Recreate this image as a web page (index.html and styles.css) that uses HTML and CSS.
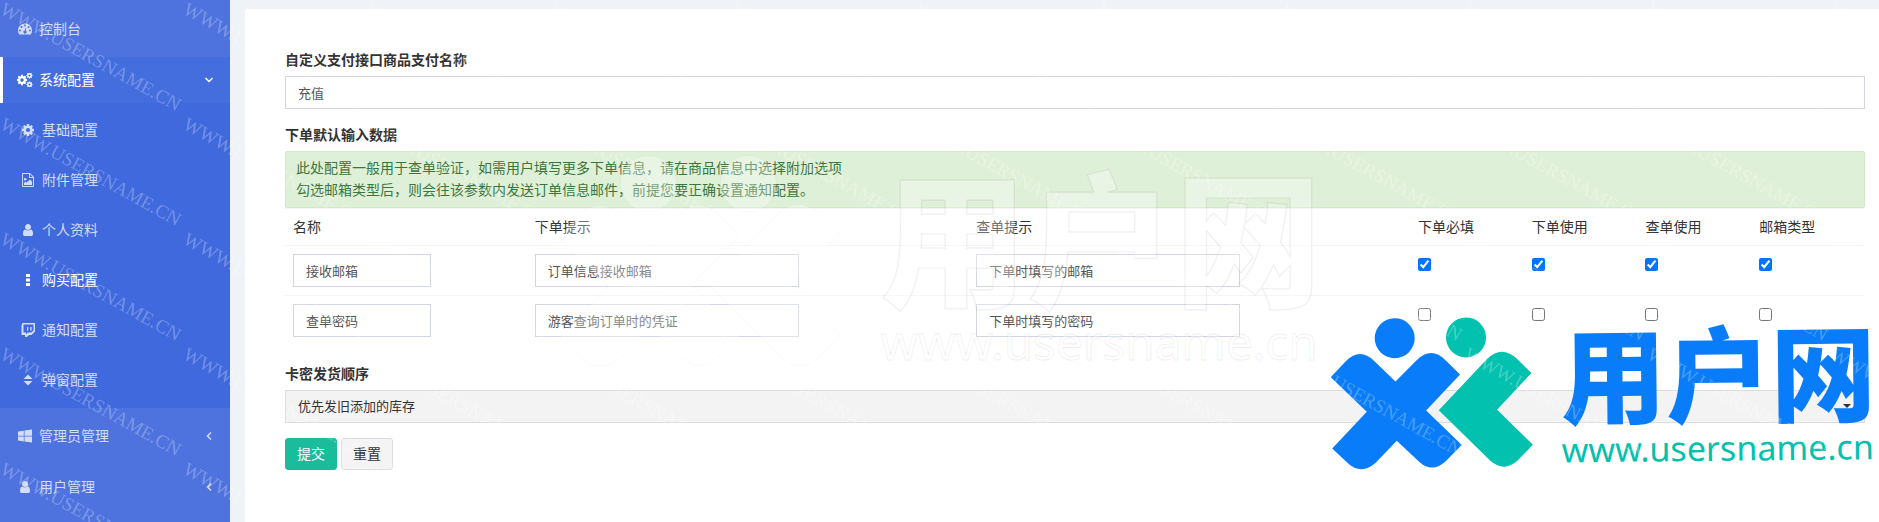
FILE: index.html
```html
<!DOCTYPE html>
<html lang="zh-CN">
<head>
<meta charset="utf-8">
<title>购买配置</title>
<link rel="stylesheet" href="styles.css">
</head>
<body>
<svg class="defs" aria-hidden="true">
  <symbol id="cog" viewBox="0 0 1792 1792"><path d="M1152 896q0-106-75-181t-181-75-181 75-75 181 75 181 181 75 181-75 75-181zm512-109v222q0 12-8 23t-20 13l-185 28q-19 54-39 91 35 50 107 138 10 12 10 25t-9 23q-27 37-99 108t-94 71q-12 0-26-9l-138-108q-44 23-91 38-16 136-29 186-7 28-36 28h-222q-14 0-24.500-8.500t-11.500-21.500l-28-184q-49-16-90-37l-141 107q-10 9-25 9-14 0-25-11-126-114-165-168-7-10-7-23 0-12 8-23 15-21 51-66.500t54-70.500q-27-50-41-99l-183-27q-13-2-21-12.500t-8-23.500v-222q0-12 8-23t19-13l186-28q14-46 39-92-40-57-107-138-10-12-10-24 0-10 9-23 26-36 98.500-107.500t94.500-71.500q13 0 26 10l138 107q44-23 91-38 16-136 29-186 7-28 36-28h222q14 0 24.500 8.500t11.500 21.500l28 184q49 16 90 37l142-107q9-9 24-9 13 0 25 10 129 119 165 170 7 8 7 22 0 12-8 23-15 21-51 66.500t-54 70.500q26 50 41 98l183 28q13 2 21 12.500t8 23.500z"/></symbol>
  <symbol id="user" viewBox="-256 0 1792 1792"><path d="M1280 1399q0 109-62.500 187t-150.500 78h-854q-88 0-150.500-78t-62.500-187q0-85 8.500-160.500t31.500-152 58.500-131 94-89 134.500-34.500q131 128 313 128t313-128q76 0 134.500 34.500t94 89 58.500 131 31.500 152 8.500 160.500zm-256-887q0 159-112.500 271.500t-271.500 112.500-271.500-112.500-112.500-271.500 112.500-271.500 271.500-112.500 271.500 112.500 112.500 271.500z"/></symbol>
  <symbol id="brand" viewBox="0 0 554 170">
    <g transform="translate(0 -7) scale(.3333)">
      <g class="brand-a">
        <circle cx="211" cy="93" r="60"/>
        <path d="M18 208 62 162Q105 118 148 160L212 223 276 160Q320 118 362 160L406 204 303 311 409 416 360 464Q320 500 282 466L214 401 150 466Q106 504 66 466L20 422 125 313Z"/>
      </g>
      <g class="brand-b">
        <circle cx="425" cy="93" r="60"/>
        <path d="M341 311 488 158Q532 116 576 158L620 202 516 311 622 417 576 464Q536 500 494 464Z"/>
      </g>
    </g>
    <text class="brand-a brand-name" x="236" y="104">用户网</text>
    <text class="brand-b brand-url" x="236" y="150">www.usersname.cn</text>
  </symbol>
</svg>

<div class="layout">
  <nav class="sidebar">
    <ul class="menu">
      <li><a class="item" href="#"><svg class="icon" viewBox="0 0 14 14"><path fill-rule="evenodd" d="M7 1.500a7 7 0 0 0-7 7c0 1.400.4 2.700 1.100 3.700.1.200.3.300.5.300h10.800c.2 0 .4-.1.500-.3A7 7 0 0 0 7 1.500ZM2 7.500a1 1 0 1 1 0 2 1 1 0 0 1 0-2Zm1.500-3.500a1 1 0 1 1 0 2 1 1 0 0 1 0-2ZM7 2.500a1 1 0 1 1 0 2 1 1 0 0 1 0-2Zm3.500 1.500a1 1 0 1 1 0 2 1 1 0 0 1 0-2ZM12 7.500a1 1 0 1 1 0 2 1 1 0 0 1 0-2ZM7.700 5.500l.7.200-.7 3a1.500 1.500 0 1 1-.8-.2Z"/></svg>控制台</a></li>
      <li class="open"><a class="item active" href="#"><svg class="icon wide" viewBox="0 0 16 14"><use href="#cog" x="-1" y="1" width="12" height="12"/><use href="#cog" x="9" y="-1" width="7" height="7"/><use href="#cog" x="9" y="8" width="7" height="7"/></svg>系统配置<svg class="chev" viewBox="0 0 10 10"><path d="M1.500 3 5 6.500 8.500 3"/></svg></a>
        <ul class="submenu">
          <li><a class="item" href="#"><svg class="icon"><use href="#cog"/></svg>基础配置</a></li>
          <li><a class="item" href="#"><svg class="icon" viewBox="0 0 14 14"><path fill-rule="evenodd" d="M1.800 0H9l4 4v9.200c0 .5-.3.800-.8.800H1.800c-.5 0-.8-.3-.8-.8V.8C1 .3 1.300 0 1.800 0ZM2 1v12h10V5H8.500L8 4.500V1Zm7 .3V4h2.700ZM3 12v-2l1.500-1.500 1 1L9 6.500l2 2V12ZM4.200 5a1.300 1.300 0 1 1 0 2.600 1.300 1.300 0 0 1 0-2.600Z"/></svg>附件管理</a></li>
          <li><a class="item" href="#"><svg class="icon"><use href="#user"/></svg>个人资料</a></li>
          <li><a class="item current" href="#"><svg class="icon" viewBox="0 0 14 14"><path d="M5 1h4v3H5zM5 5.500h4v3H5zM5 10h4v3H5z"/></svg>购买配置</a></li>
          <li><a class="item" href="#"><svg class="icon" viewBox="0 0 14 14"><path fill-rule="evenodd" d="M1.500 0H14v8.500L10.500 12H8l-2 2H4v-2H.5V2.500ZM2.500 1.500v8H5v1.700l1.700-1.700h3.500l2.300-2V1.500ZM6 4h1.300v3.500H6zM9.300 4h1.300v3.500H9.300z"/></svg>通知配置</a></li>
          <li><a class="item" href="#"><svg class="icon" viewBox="0 0 14 14"><path d="M7 1.500 11.500 6h-9ZM2.500 8h9L7 12.500Z"/></svg>弹窗配置</a></li>
        </ul>
      </li>
      <li><a class="item" href="#"><svg class="icon" viewBox="0 0 14 14"><path d="M0 2.500 5.800 1.700V6.700H0ZM6.500 1.600 14 .5V6.700H6.500ZM0 7.400H5.800V12.400L0 11.600ZM6.500 7.400H14V13.600L6.500 12.500Z"/></svg>管理员管理<svg class="chev" viewBox="0 0 10 10"><path d="M7 1.500 3.500 5 7 8.500"/></svg></a></li>
      <li><a class="item" href="#"><svg class="icon"><use href="#user"/></svg>用户管理<svg class="chev" viewBox="0 0 10 10"><path d="M7 1.500 3.500 5 7 8.500"/></svg></a></li>
    </ul>
  </nav>

  <main class="content">
    <form class="panel">
      <label class="title" for="payname">自定义支付接口商品支付名称</label>
      <input class="field" id="payname" type="text" value="充值">

      <h2 class="title">下单默认输入数据</h2>
      <p class="notice">此处配置一般用于查单验证，如需用户填写更多下单信息，请在商品信息中选择附加选项<br>勾选邮箱类型后，则会往该参数内发送订单信息邮件，前提您要正确设置通知配置。</p>
      <table class="grid">
        <thead>
          <tr><th class="c-name">名称</th><th class="c-tip">下单提示</th><th class="c-tip">查单提示</th><th>下单必填</th><th>下单使用</th><th>查单使用</th><th>邮箱类型</th></tr>
        </thead>
        <tbody>
          <tr>
            <td><input class="field short" type="text" aria-label="名称" value="接收邮箱"></td>
            <td><input class="field medium" type="text" aria-label="下单提示" value="订单信息接收邮箱"></td>
            <td><input class="field medium" type="text" aria-label="查单提示" value="下单时填写的邮箱"></td>
            <td><input type="checkbox" aria-label="下单必填" checked></td>
            <td><input type="checkbox" aria-label="下单使用" checked></td>
            <td><input type="checkbox" aria-label="查单使用" checked></td>
            <td><input type="checkbox" aria-label="邮箱类型" checked></td>
          </tr>
          <tr>
            <td><input class="field short" type="text" aria-label="名称" value="查单密码"></td>
            <td><input class="field medium" type="text" aria-label="下单提示" value="游客查询订单时的凭证"></td>
            <td><input class="field medium" type="text" aria-label="查单提示" value="下单时填写的密码"></td>
            <td><input type="checkbox" aria-label="下单必填"></td>
            <td><input type="checkbox" aria-label="下单使用"></td>
            <td><input type="checkbox" aria-label="查单使用"></td>
            <td><input type="checkbox" aria-label="邮箱类型"></td>
          </tr>
        </tbody>
      </table>

      <label class="title" for="order">卡密发货顺序</label>
      <div class="select-wrap">
        <select class="select" id="order"><option>优先发旧添加的库存</option></select>
      </div>
      <div class="actions">
        <button class="btn primary" type="submit">提交</button>
        <button class="btn" type="reset">重置</button>
      </div>
    </form>
  </main>
</div>

<svg class="mark ghost" viewBox="0 0 554 170" aria-hidden="true"><use href="#brand"/></svg>
<svg class="mark logo" viewBox="0 0 554 170" role="img" aria-label="用户网"><use href="#brand"/></svg>
<svg class="tiles" aria-hidden="true">
  <defs>
    <pattern id="tile" x="0" y="0" width="183" height="115" patternUnits="userSpaceOnUse">
      <text class="tile-text" transform="translate(-1 13) rotate(29)">WWW.USERSNAME.CN</text>
    </pattern>
  </defs>
  <rect width="100%" height="100%" fill="url(#tile)"/>
</svg>
</body>
</html>
```
FILE: styles.css
```css
* { box-sizing: border-box; }

body {
  margin: 0;
  position: relative;
  height: 100vh;
  overflow: hidden;
  background: #eff3f7;
  color: #333;
  font: 14px/22px "Liberation Sans", "Noto Sans CJK SC", sans-serif;
}

ul { list-style: none; margin: 0; padding: 0; }

.defs { position: absolute; width: 0; height: 0; }

.layout { display: flex; min-height: 100%; }

/* Sidebar */
.sidebar { flex: 0 0 230px; background: #4e73df; }
.menu { display: flex; flex-direction: column; gap: 5px; padding-top: 6px; }
.item {
  display: flex;
  align-items: center;
  height: 46px;
  padding: 0 16px 0 18px;
  color: #d3dcf9;
  text-decoration: none;
}
.open { background: #4069dd; }
.item.active {
  background: #446dde;
  border-left: 3px solid #fff;
  padding-left: 14px;
  color: #fff;
}
.submenu { padding: 2px 0 3px; }
.submenu .item { height: 50px; padding-left: 21px; }
.item.current { color: #fff; }
.icon { width: 14px; height: 14px; margin-right: 7px; fill: currentColor; flex: none; }
.icon.wide { width: 16px; margin-right: 6px; }
.chev {
  width: 10px;
  height: 10px;
  margin-left: auto;
  fill: none;
  stroke: currentColor;
  stroke-width: 1.5;
}

/* Form panel */
.content { flex: 1; min-width: 0; padding: 9px 0 0 15px; }
.panel {
  min-height: 100%;
  padding: 40px 14px 0 40px;
  background: #fff;
  border-radius: 4px 0 0 0;
}
.title {
  display: block;
  margin: 0 0 5px;
  font-size: 14px;
  line-height: 22px;
  font-weight: 700;
}
.field {
  display: block;
  width: 100%;
  height: 33px;
  padding: 0 12px;
  border: 1px solid #d2d6de;
  background: #fff;
  color: #555;
  font: 13px/20px "Liberation Sans", "Noto Sans CJK SC", sans-serif;
}
.field + .title { margin-top: 15px; }
.short { width: 138px; }
.medium { width: 264px; }
.notice {
  margin: 0;
  padding: 5px 10px 6px;
  border: 1px solid #d0e9c6;
  border-radius: 2px;
  background: #dff0d8;
  color: #3c763d;
}

.grid {
  width: 100%;
  margin-bottom: 18px;
  border-collapse: collapse;
  table-layout: fixed;
}
.grid th {
  width: 7.2%;
  padding: 7px 8px;
  border-top: 1px solid #f4f4f4;
  font-weight: 400;
  text-align: left;
}
.grid .c-name { width: 15.3%; }
.grid .c-tip { width: 27.950%; }
.grid td {
  padding: 8px;
  border-top: 1px solid #f4f4f4;
  vertical-align: top;
}
.grid input[type="checkbox"] {
  display: block;
  width: 13px;
  height: 13px;
  margin: 4px 0 0;
}

.select-wrap { position: relative; }
.select-wrap::after {
  content: "";
  position: absolute;
  z-index: 3;
  right: 14px;
  top: 14px;
  border: 4px solid transparent;
  border-top-color: #333;
  border-bottom: 0;
  pointer-events: none;
}
.select {
  display: block;
  width: 100%;
  height: 33px;
  padding: 0 12px;
  border: 1px solid #ddd;
  border-radius: 0;
  background: #f3f3f3;
  color: #333;
  appearance: none;
  font: 13px/20px "Liberation Sans", "Noto Sans CJK SC", sans-serif;
}

.actions { display: flex; gap: 4px; margin-top: 15px; }
.btn {
  height: 32px;
  padding: 0 11px;
  border: 1px solid #ddd;
  border-radius: 3px;
  background: #f4f4f4;
  color: #333;
  font: 14px/20px "Liberation Sans", "Noto Sans CJK SC", sans-serif;
}
.btn.primary { background: #1abc9c; border-color: #1abc9c; color: #fff; }

/* Overlays */
.mark { position: absolute; pointer-events: none; }
.brand-a { fill: var(--a); stroke: var(--line); }
.brand-b { fill: var(--b); stroke: var(--line); }
.brand-name { font: 900 105px "Noto Sans CJK SC", sans-serif; }
.brand-url { font: 400 34px "Noto Sans", sans-serif; }
.ghost {
  z-index: 1;
  left: 550px;
  top: 150px;
  width: 776px;
  --a: rgba(255, 255, 255, .3);
  --b: rgba(255, 255, 255, .3);
  --line: rgba(0, 0, 0, .06);
}
.logo {
  z-index: 2;
  right: 0;
  top: 312px;
  width: 554px;
  transform: rotate(-.6deg);
  --a: #097cf9;
  --b: #02c1ae;
  --line: none;
}
.tiles {
  position: absolute;
  z-index: 4;
  inset: 0;
  width: 100%;
  height: 100%;
  pointer-events: none;
}
.tile-text { font: 19px "Liberation Serif", serif; fill: rgba(255, 255, 255, .25); }
```
